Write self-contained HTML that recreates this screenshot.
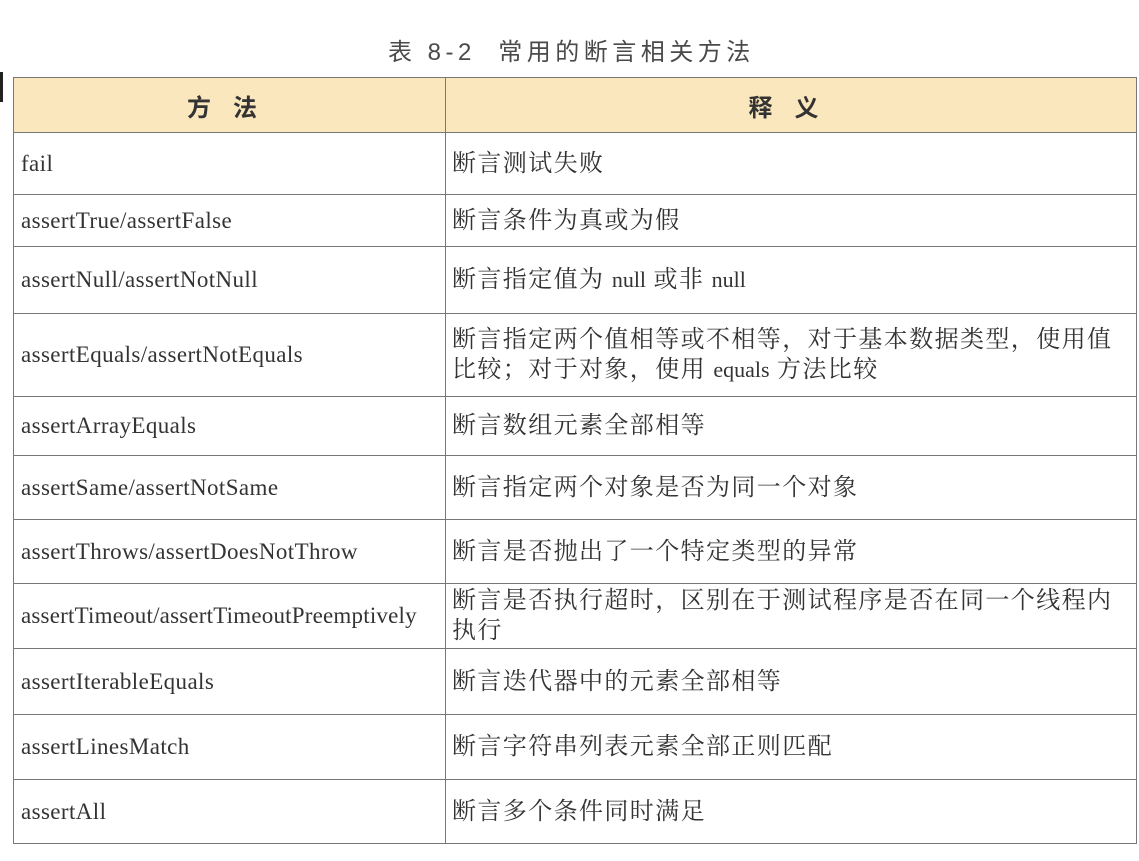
<!DOCTYPE html>
<html><head><meta charset="utf-8"><style>
html,body{margin:0;padding:0;background:#fff;width:1139px;height:861px;overflow:hidden;position:relative}
.title{position:absolute;top:32px;left:388px;font:24px "Liberation Sans","Noto Sans CJK SC",sans-serif;color:#4a4a4a;letter-spacing:4.5px;white-space:pre}
.bar{position:absolute;left:0;top:72px;width:3px;height:30px;background:#222}
table{position:absolute;left:13px;top:77px;border-collapse:collapse;width:1124px}
td{border:1.5px solid #777;padding:0 0 0 7px;font:23px "Liberation Serif","Noto Serif CJK SC",serif;letter-spacing:0.4px;color:#333;vertical-align:middle}
td.c{font-size:24px;letter-spacing:1.4px;padding-left:6px;line-height:30px}
td.c span{font-size:22px;letter-spacing:0}
tr.h td{background:#fbe7bd;text-align:center;font:bold 24px "Liberation Sans","Noto Sans CJK SC",sans-serif;letter-spacing:22px;color:#333}
</style></head><body>
<div class="title">表 8-2  常用的断言相关方法</div>
<div class="bar"></div>
<table>
<colgroup><col style="width:432px"><col></colgroup>
<tr class="h" style="height:55px"><td>方法</td><td>释义</td></tr>
<tr style="height:62px"><td>fail</td><td class="c">断言测试失败</td></tr>
<tr style="height:52px"><td>assertTrue/assertFalse</td><td class="c">断言条件为真或为假</td></tr>
<tr style="height:67px"><td>assertNull/assertNotNull</td><td class="c">断言指定值为 <span>null</span> 或非 <span>null</span></td></tr>
<tr style="height:83px"><td>assertEquals/assertNotEquals</td><td class="c">断言指定两个值相等或不相等，对于基本数据类型，使用值比较；对于对象，使用 <span>equals</span> 方法比较</td></tr>
<tr style="height:59px"><td>assertArrayEquals</td><td class="c">断言数组元素全部相等</td></tr>
<tr style="height:64px"><td>assertSame/assertNotSame</td><td class="c">断言指定两个对象是否为同一个对象</td></tr>
<tr style="height:64px"><td>assertThrows/assertDoesNotThrow</td><td class="c">断言是否抛出了一个特定类型的异常</td></tr>
<tr style="height:65px"><td style="letter-spacing:0.2px">assertTimeout/assertTimeoutPreemptively</td><td class="c">断言是否执行超时，区别在于测试程序是否在同一个线程内执行</td></tr>
<tr style="height:66px"><td>assertIterableEquals</td><td class="c">断言迭代器中的元素全部相等</td></tr>
<tr style="height:65px"><td>assertLinesMatch</td><td class="c">断言字符串列表元素全部正则匹配</td></tr>
<tr style="height:64px"><td>assertAll</td><td class="c">断言多个条件同时满足</td></tr>
</table>
</body></html>
